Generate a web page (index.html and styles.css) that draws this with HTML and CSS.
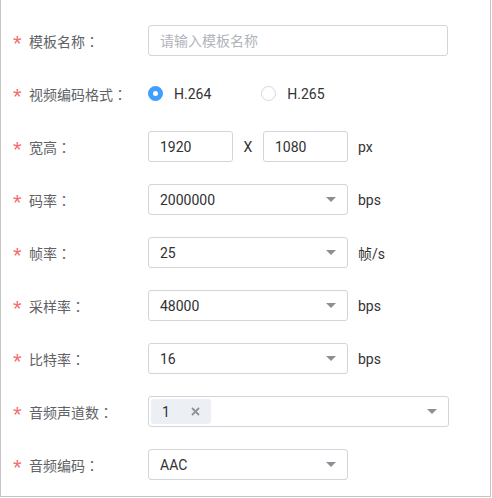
FILE: index.html
```html
<!DOCTYPE html>
<html lang="zh-CN">
<head>
  <meta charset="UTF-8">
  <meta name="viewport" content="width=device-width, initial-scale=1.0">
  <title>模板设置</title>
  <link rel="stylesheet" href="styles.css">
</head>
<body>

  <div class="panel">
    <form class="form">

      <div class="row">
        <label class="label"><span class="star">*</span>模板名称<span class="colon">：</span></label>
        <input class="input input-wide" type="text" placeholder="请输入模板名称">
      </div>

      <div class="row">
        <label class="label"><span class="star">*</span>视频编码格式<span class="colon">：</span></label>
        <div class="radios">
          <span class="radio checked"><span class="dot"></span>H.264</span>
          <span class="radio"><span class="dot"></span>H.265</span>
        </div>
      </div>

      <div class="row">
        <label class="label"><span class="star">*</span>宽高<span class="colon">：</span></label>
        <input class="input input-small" type="text" value="1920">
        <span class="times">X</span>
        <input class="input input-small" type="text" value="1080">
        <span class="unit">px</span>
      </div>

      <div class="row">
        <label class="label"><span class="star">*</span>码率<span class="colon">：</span></label>
        <div class="select"><span>2000000</span><i class="caret"></i></div>
        <span class="unit">bps</span>
      </div>

      <div class="row">
        <label class="label"><span class="star">*</span>帧率<span class="colon">：</span></label>
        <div class="select"><span>25</span><i class="caret"></i></div>
        <span class="unit">帧/s</span>
      </div>

      <div class="row">
        <label class="label"><span class="star">*</span>采样率<span class="colon">：</span></label>
        <div class="select"><span>48000</span><i class="caret"></i></div>
        <span class="unit">bps</span>
      </div>

      <div class="row">
        <label class="label"><span class="star">*</span>比特率<span class="colon">：</span></label>
        <div class="select"><span>16</span><i class="caret"></i></div>
        <span class="unit">bps</span>
      </div>

      <div class="row">
        <label class="label"><span class="star">*</span>音频声道数<span class="colon">：</span></label>
        <div class="select select-multi">
          <span class="tag">1
            <svg class="tag-close" width="9" height="9" viewBox="0 0 9 9">
              <path d="M1 1L8 8M8 1L1 8" stroke="#909399" stroke-width="1.8" fill="none"/>
            </svg>
          </span>
          <i class="caret"></i>
        </div>
      </div>

      <div class="row">
        <label class="label"><span class="star">*</span>音频编码<span class="colon">：</span></label>
        <div class="select"><span>AAC</span><i class="caret"></i></div>
      </div>

    </form>
  </div>

</body>
</html>
```

FILE: styles.css
```css
body {
  margin: 0;
  background: #fff;
  font-family: Roboto, "Noto Sans CJK SC", sans-serif;
  font-size: 14px;
}
.panel {
  box-sizing: border-box;
  width: 491px;
  height: 497px;
  border: 1px solid #c4c4c4;
  border-top: none;
  padding: 25px 0 0 13px;
}
.form {
  display: flex;
  flex-direction: column;
  gap: 22px;
}
.row {
  display: flex;
  align-items: center;
  height: 31px;
}
.label {
  width: 134px;
  color: #606266;
  font-family: "Noto Sans CJK SC", sans-serif;
  display: flex;
  align-items: center;
}
.colon {
  font-family: "Noto Sans CJK TC", sans-serif;
}
.star {
  color: #f56c6c;
  width: 16px;
  height: 14px;
  font-size: 22px;
  line-height: 21px;
  font-family: "Liberation Sans", sans-serif;
  position: relative;
  top: -1px;
  margin-left: -1px;
}
.input {
  box-sizing: border-box;
  height: 31px;
  border: 1px solid #d2d5db;
  border-radius: 3px;
  padding: 0 11px;
  font-family: Roboto, "Noto Sans CJK SC", sans-serif;
  font-size: 14px;
  color: #303133;
  outline: none;
}
.input::placeholder {
  color: #b0b4bb;
  font-family: "Noto Sans CJK SC", sans-serif;
}
.input-wide {
  width: 300px;
}
.input-small {
  width: 85px;
}
.times {
  width: 30px;
  text-align: center;
  color: #303133;
}
.unit {
  margin-left: 10px;
  color: #333;
}
.radios {
  display: flex;
  align-items: center;
  gap: 50px;
  color: #333;
}
.radio {
  display: flex;
  align-items: center;
  gap: 11px;
}
.dot {
  box-sizing: border-box;
  width: 15px;
  height: 15px;
  border-radius: 50%;
  border: 1px solid #d4d7dd;
  background: #fff;
}
.radio.checked .dot {
  border: 5px solid #409eff;
}
.select {
  box-sizing: border-box;
  width: 200px;
  height: 31px;
  border: 1px solid #d2d5db;
  border-radius: 3px;
  padding: 0 11px;
  display: flex;
  align-items: center;
  justify-content: space-between;
  color: #303133;
}
.caret {
  width: 0;
  height: 0;
  border-left: 5px solid transparent;
  border-right: 5px solid transparent;
  border-top: 5px solid #8c8f96;
}
.select-multi {
  width: 301px;
  padding-left: 2px;
}
.tag {
  box-sizing: border-box;
  width: 60px;
  height: 25px;
  background: #eceff3;
  border-radius: 3px;
  padding: 0 11px;
  display: flex;
  align-items: center;
  justify-content: space-between;
  color: #303133;
}
```
